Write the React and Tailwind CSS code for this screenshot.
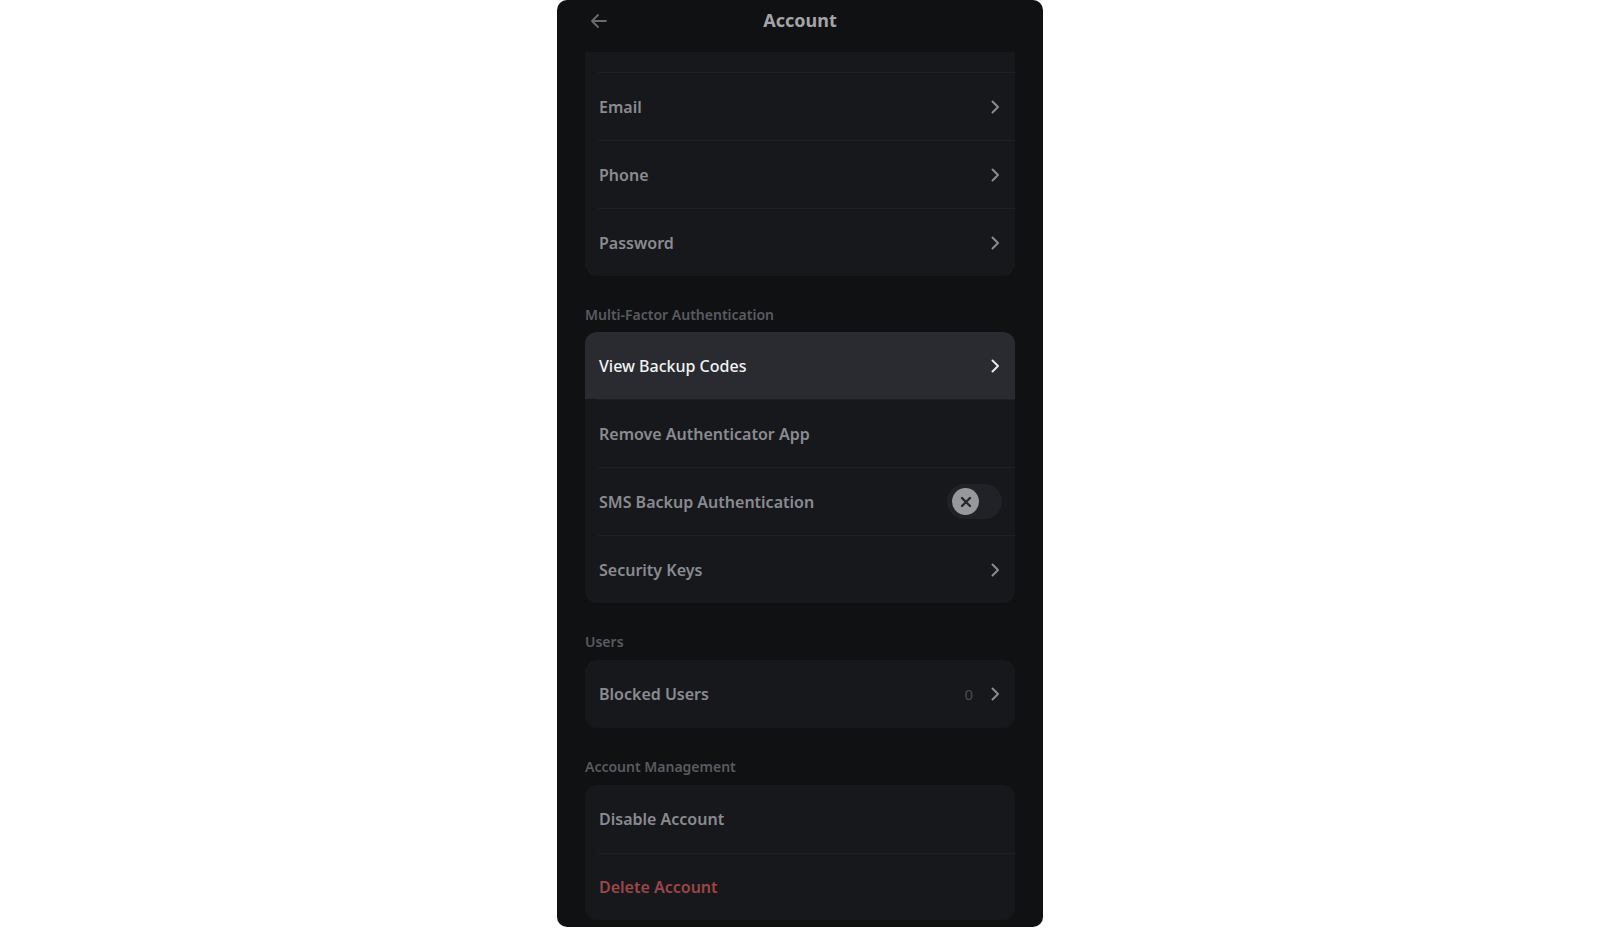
const Chevron = () => (
  <svg width="16" height="16" viewBox="0 0 16 16" fill="none" className="text-[#8a8b90]">
    <path d="M5.5 2.5l5.5 5.5-5.5 5.5" stroke="currentColor" strokeWidth="2" strokeLinecap="round" strokeLinejoin="round" />
  </svg>
);

const Divider = () => <div className="h-px ml-[13px] bg-[#1f2025]" />;

const Row = ({ label, right, className = '', textClass = 'text-[#8a8b90] font-semibold', h = 'h-[67px]' }) => (
  <div className={`${h} flex items-center justify-between pl-[14px] pr-[12px] ${className}`}>
    <span className={`text-[16px] ${textClass}`}>{label}</span>
    {right}
  </div>
);

const SectionLabel = ({ children, mb = 'mb-[8px]' }) => (
  <div className={`mt-[30px] ${mb} h-[18px] leading-[18px] text-[14px] font-semibold text-[#5a5b60]`}>
    {children}
  </div>
);

const Toggle = () => (
  <div className="w-[55px] h-[35px] rounded-full bg-[#212227] flex items-center pl-[5px] mr-[1px]">
    <div className="w-[27px] h-[27px] rounded-full bg-[#97989c] flex items-center justify-center">
      <svg width="14" height="14" viewBox="0 0 14 14" fill="none">
        <path d="M3 3l8 8M11 3l-8 8" stroke="#26272b" strokeWidth="2.4" strokeLinecap="round" />
      </svg>
    </div>
  </div>
);

export default function App() {
  return (
    <div className="w-full h-[930px] bg-white" style={{ fontFamily: '"Noto Sans", sans-serif' }}>
      <div className="w-[486px] h-[927px] mx-auto bg-[#101113] rounded-[10px] overflow-hidden flex flex-col">
        <div className="h-[40px] mb-[12px] relative flex items-center justify-center">
          <svg width="20" height="20" viewBox="0 0 20 20" fill="none" className="absolute left-[32px] top-[11px]">
            <path d="M17 10H3M9 4l-6 6 6 6" stroke="#6a6b70" strokeWidth="1.8" strokeLinecap="round" strokeLinejoin="round" />
          </svg>
          <span className="text-[18px] font-bold text-[#a3a4a8]">Account</span>
        </div>

        <div className="px-[28px] flex-1 overflow-hidden">
          <div className="bg-[#17181c] rounded-b-[12px]">
            <div className="h-[20px]" />
            <Divider />
            <Row label="Email" right={<Chevron />} />
            <Divider />
            <Row label="Phone" right={<Chevron />} />
            <Divider />
            <Row label="Password" right={<Chevron />} />
          </div>

          <SectionLabel>Multi-Factor Authentication</SectionLabel>
          <div className="bg-[#17181c] rounded-[12px] overflow-hidden">
            <Row label="View Backup Codes" className="bg-[#2a2b31]" textClass="text-[#f2f3f5] font-medium" right={
              <svg width="16" height="16" viewBox="0 0 16 16" fill="none" className="text-[#e6e7ea]">
                <path d="M5.5 2.5l5.5 5.5-5.5 5.5" stroke="currentColor" strokeWidth="2" strokeLinecap="round" strokeLinejoin="round" />
              </svg>
            } />
            <Divider />
            <Row label="Remove Authenticator App" />
            <Divider />
            <Row label="SMS Backup Authentication" right={<Toggle />} />
            <Divider />
            <Row label="Security Keys" right={<Chevron />} />
          </div>

          <SectionLabel mb="mb-[9px]">Users</SectionLabel>
          <div className="bg-[#17181c] rounded-[12px]">
            <Row label="Blocked Users" h="h-[68px]" right={
              <div className="flex items-center gap-[14px]">
                <span className="text-[15px] text-[#4a4b50]">0</span>
                <Chevron />
              </div>
            } />
          </div>

          <SectionLabel mb="mb-[9px]">Account Management</SectionLabel>
          <div className="bg-[#17181c] rounded-[12px]">
            <Row label="Disable Account" h="h-[68px]" />
            <Divider />
            <Row label="Delete Account" h="h-[66px]" textClass="text-[#9e4548] font-semibold" />
          </div>
        </div>
      </div>
    </div>
  );
}
